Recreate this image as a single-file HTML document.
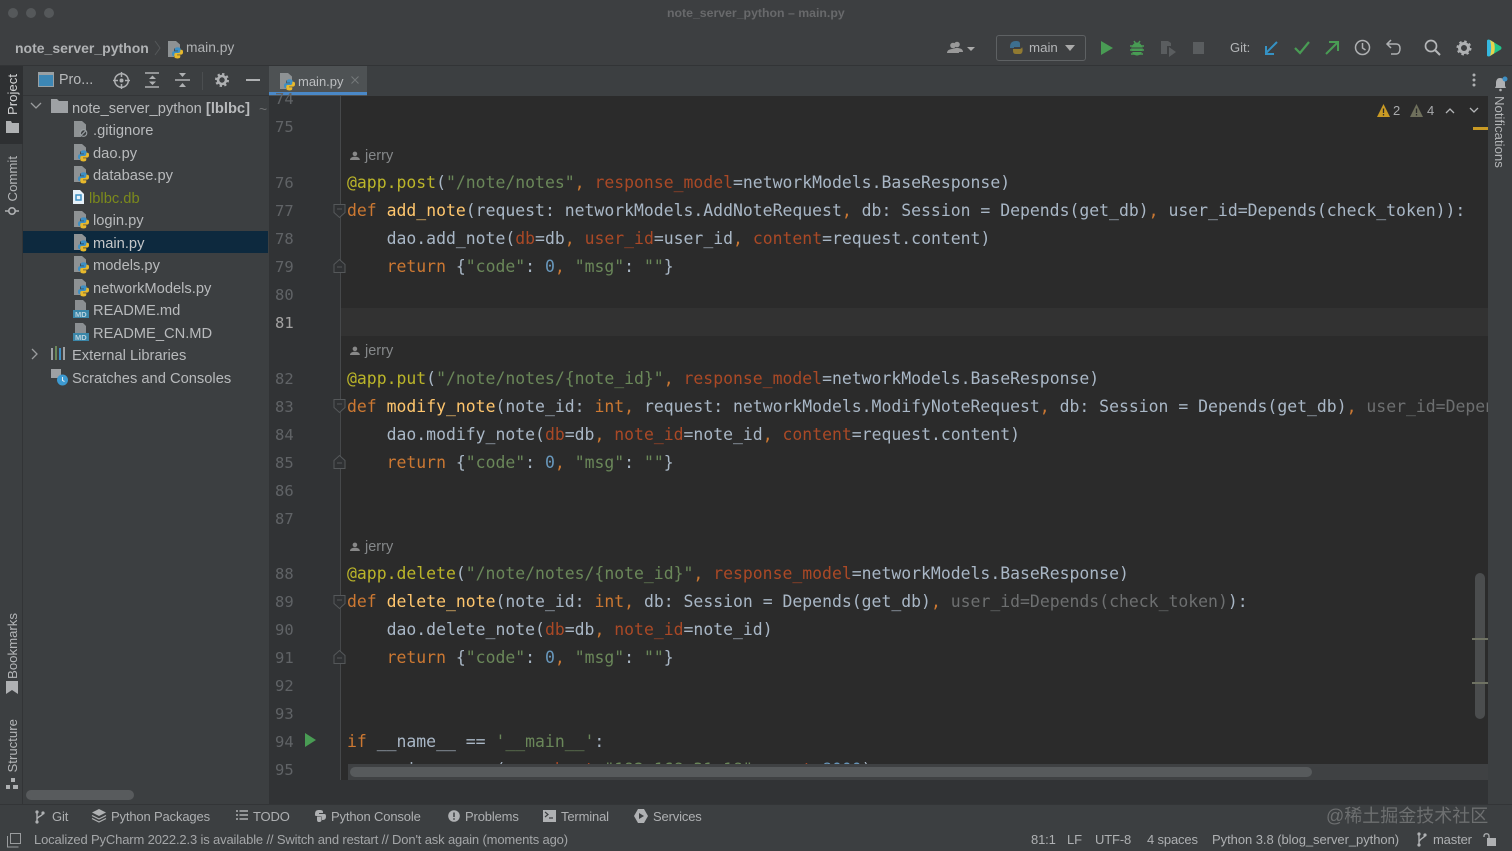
<!DOCTYPE html>
<html lang="en"><head><meta charset="utf-8"><title>note_server_python – main.py</title>
<style>
*{box-sizing:border-box}
html,body{margin:0;padding:0;background:#3c3f41}
#r{position:relative;width:1512px;height:851px;overflow:hidden;background:#3c3f41;font-family:"Liberation Sans",sans-serif;color:#b4b6b8;font-size:14px}
.a{position:absolute}
.t{position:absolute;white-space:nowrap;line-height:18px}
.c{position:absolute;left:347px;white-space:pre;font-family:"DejaVu Sans Mono","Liberation Mono",monospace;font-size:16.45px;line-height:28px;color:#a9b7c6;height:28px}
.k{color:#cc7832}.s{color:#6a8759}.n{color:#6897bb}.d{color:#bbb529}.f{color:#ffc66d}.p{color:#aa4926}.g{color:#6d6f70}
.l{position:absolute;left:275px;width:20px;font-family:"DejaVu Sans Mono","Liberation Mono",monospace;font-size:15.5px;line-height:20px;color:#606366}
.v{position:absolute;writing-mode:vertical-rl;transform:rotate(180deg);white-space:nowrap;font-size:13.2px;color:#b4b6b8;line-height:16px}
.tr{position:absolute;white-space:nowrap;font-size:14.7px;line-height:20px;color:#b8babc}
svg{position:absolute;overflow:visible}
.j{position:absolute;left:365px;font-size:14.5px;line-height:18px;color:#85888a}
.b{font-size:13px;letter-spacing:-.15px;color:#aeb0b2}
</style></head><body><div id="r">
<svg width="0" height="0" style="position:absolute"><defs>
<g id="py"><path d="M0 0h8l4 3.500v4H6v8.500H0z" fill="#8e9294"/><g transform="translate(-.6,.9) scale(.92)"><path d="M11 6c-2.500 0-3 1-3 2v1.500h3.500v.7H7c-1.300 0-2 1-2 2.800 0 1.800.7 2.500 1.700 2.500H8v-1.600c0-1.200 1-1.900 2-1.900h3c1 0 1.500-.7 1.500-1.500V8c0-1-1-2-3.500-2z" fill="#3d8fc4"/><path d="M11 18c2.500 0 3-1 3-2v-1.500h-3.500v-.7H15c1.300 0 2-1 2-2.800 0-1.800-.7-2.500-1.700-2.500H14v1.600c0 1.200-1 1.900-2 1.900H9c-1 0-1.500.7-1.500 1.500V16c0 1 1 2 3.500 2z" fill="#e8b92c"/></g></g>
<g id="md"><path d="M3 -1h8l3 3v7H3z" fill="#8b8f92"/><rect x="1" y="9" width="16" height="8" fill="#3a86a8"/><text x="3" y="16" font-family="Liberation Sans,sans-serif" font-size="7.500" font-weight="bold" fill="#b9d3df">MD</text></g>
<g id="usr"><circle cx="6" cy="3.500" r="2.800" fill="#999"/><path d="M0 11c0-3 3-4 6-4s6 1 6 4z" fill="#999"/></g>
</defs></svg>

<!-- Title bar -->
<div class="a" style="left:0;top:0;width:1512px;height:66px;background:#3d3f41"></div>
<div class="a" style="left:0;top:65px;width:1512px;height:1px;background:#323436"></div>
<div class="a" style="left:8px;top:8px;width:10px;height:10px;border-radius:50%;background:#55585a"></div>
<div class="a" style="left:26px;top:8px;width:10px;height:10px;border-radius:50%;background:#55585a"></div>
<div class="a" style="left:44px;top:8px;width:10px;height:10px;border-radius:50%;background:#55585a"></div>
<div class="t" style="left:667px;top:4px;font-size:12.3px;font-weight:bold;color:#68696b">note_server_python – main.py</div>
<div class="t" style="left:15px;top:39px;font-size:14px;font-weight:bold;color:#b0b2b4">note_server_python</div>
<svg style="left:154px;top:40px" width="8" height="16"><path d="M1 1l5 7-5 7" fill="none" stroke="#55585a"/></svg>
<svg style="left:168px;top:41px" width="18" height="19"><use href="#py"/></svg>
<div class="t" style="left:186px;top:39px;font-size:13.8px;color:#b0b2b4">main.py</div>

<!-- Toolbar right -->
<svg style="left:947px;top:40px" width="30" height="16"><use href="#usr" transform="translate(4,1)"/><use href="#usr" transform="translate(0,2)"/><path d="M20 7h8l-4 4z" fill="#aaa"/></svg>
<div class="a" style="left:996px;top:35px;width:90px;height:26px;border:1px solid #5e6163;border-radius:3px"></div>
<svg style="left:1008px;top:40px" width="16" height="16" opacity=".6"><path d="M2 7c0-4 2-6 6-6 3 0 4 1 4 3v3H6v1H2z" fill="#3d8fc4"/><path d="M14 7c1 2 1 7-2 7H8c-3 0-3-2-3-5h6c2 0 3-1 3-2z" fill="#c9a227"/></svg>
<div class="t" style="left:1029px;top:39px;font-size:13.3px;color:#b4b6b8">main</div>
<svg style="left:1064px;top:44px" width="12" height="8"><path d="M1 1h10l-5 6z" fill="#aaa"/></svg>
<svg style="left:1100px;top:40px" width="14" height="16"><path d="M1 1l12 7-12 7z" fill="#499c54"/></svg>
<svg style="left:1129px;top:40px" width="16" height="16"><ellipse cx="8" cy="9" rx="5.500" ry="6.500" fill="#499c54"/><path d="M1 6h14M1 10h14M2 14h12M5 1l2 3M11 1L9 4" stroke="#499c54" stroke-width="1.500"/><path d="M3 8h10M3 11.500h10" stroke="#3d3f41"/></svg>
<svg style="left:1160px;top:40px" width="16" height="16"><path d="M1 1h7l3 2v3H7v8H1z" fill="#5a5d5f"/><path d="M9 7l7 5-7 5z" fill="#5a5d5f"/></svg>
<div class="a" style="left:1193px;top:42px;width:11px;height:12px;background:#5a5d5f"></div>
<div class="t" style="left:1230px;top:39px;font-size:13px;color:#b4b6b8">Git:</div>
<svg style="left:1263px;top:40px" width="16" height="16"><path d="M14 2L3 13M3 6v8h8" fill="none" stroke="#3592c4" stroke-width="2"/></svg>
<svg style="left:1294px;top:41px" width="16" height="14"><path d="M1 7l5 5L15 1" fill="none" stroke="#499c54" stroke-width="2.200"/></svg>
<svg style="left:1324px;top:40px" width="16" height="16"><path d="M2 14L13 3M5 2h9v9" fill="none" stroke="#499c54" stroke-width="2"/></svg>
<svg style="left:1354px;top:39px" width="17" height="17"><circle cx="8.500" cy="8.500" r="7" fill="none" stroke="#aeb0b2" stroke-width="1.500"/><path d="M8.500 4v5l3 2" fill="none" stroke="#aeb0b2" stroke-width="1.500"/></svg>
<svg style="left:1386px;top:39px" width="16" height="17"><path d="M5 1L1 5l4 4M1 5h9c3 0 4 2 4 4.500S13 15 10 15H5" fill="none" stroke="#aeb0b2" stroke-width="1.500"/></svg>
<svg style="left:1424px;top:39px" width="17" height="17"><circle cx="7" cy="7" r="5.500" fill="none" stroke="#b4b6b8" stroke-width="1.700"/><path d="M11 11l5 5" stroke="#b4b6b8" stroke-width="2"/></svg>
<svg style="left:1456px;top:40px" width="16" height="16"><circle cx="8" cy="8" r="4.500" fill="none" stroke="#aeb0b2" stroke-width="3"/><circle cx="8" cy="8" r="6.500" fill="none" stroke="#aeb0b2" stroke-width="2" stroke-dasharray="2.500 2.600"/></svg>
<svg style="left:1486px;top:39px" width="16" height="18"><path d="M1 2c0-1 1-2 3-1l10 6c2 1 2 3 0 4L4 17c-2 1-3 0-3-1z" fill="#21c48a"/><path d="M1 2c0-1 1-2 3-1l2 1.200c1 4 1 9 0 13L4 17c-2 1-3 0-3-1z" fill="#35b8e0"/><path d="M4 1l4 2.400c1 3 1 8 0 11L4 17c1.500-5 1.500-11 0-16z" fill="#e8d24c"/></svg>

<!-- Left tool bar -->
<div class="a" style="left:0;top:66px;width:23px;height:738px;background:#3c3f41;border-right:1px solid #323436"></div>
<div class="a" style="left:0;top:66px;width:23px;height:78px;background:#2e3032"></div>
<div class="v" style="left:5px;top:74px;color:#d4d5d6">Project</div>
<svg style="left:6px;top:121px" width="13" height="12"><path d="M0 0h5l1 2h7v10H0z" fill="#afb1b3"/></svg>
<div class="v" style="left:5px;top:156px">Commit</div>
<svg style="left:5px;top:205px" width="14" height="12"><circle cx="7" cy="6" r="3.200" fill="none" stroke="#aeb0b2" stroke-width="1.600"/><path d="M0 6h3.500M10.500 6H14" stroke="#aeb0b2" stroke-width="1.600"/></svg>
<div class="v" style="left:5px;top:613px">Bookmarks</div>
<svg style="left:6px;top:681px" width="12" height="13"><path d="M0 0h12v13l-6-4-6 4z" fill="#afb1b3"/></svg>
<div class="v" style="left:5px;top:719px">Structure</div>
<svg style="left:6px;top:778px" width="13" height="12"><path d="M5 0h4v4H5zM0 7h4v4H0zM7 7h5v4H7z" fill="#afb1b3"/></svg>

<!-- Project header -->
<div class="a" style="left:23px;top:66px;width:246px;height:30px;background:#3c3f41;border-bottom:1px solid #333537"></div>
<svg style="left:38px;top:72px" width="16" height="16"><rect x=".5" y=".5" width="15" height="14" fill="#3d87b5" stroke="#9aa0a3"/><rect x=".5" y=".5" width="15" height="2.500" fill="#9aa0a3"/></svg>
<div class="t" style="left:59px;top:71px;font-size:14.3px;color:#b8babc">Pro...</div>
<svg style="left:113px;top:72px" width="17" height="17"><circle cx="8.500" cy="8.500" r="6.800" fill="none" stroke="#aeb0b2" stroke-width="1.500"/><circle cx="8.500" cy="8.500" r="2" fill="#aeb0b2"/><path d="M8.500 0v5M8.500 12v5M0 8.500h5M12 8.500h5" stroke="#aeb0b2" stroke-width="1.500"/></svg>
<svg style="left:145px;top:72px" width="15" height="16"><path d="M0 1h14M0 15h14" stroke="#aeb0b2" stroke-width="1.500"/><path d="M4 7l3.500-3.500L11 7zM4 9.500l3.500 3.500 3.500-3.500z" fill="#aeb0b2"/></svg>
<svg style="left:175px;top:72px" width="15" height="16"><path d="M0 8h15" stroke="#aeb0b2" stroke-width="1.500"/><path d="M4 1l3.500 4L11 1zM4 15l3.500-4 3.500 4z" fill="#aeb0b2"/></svg>
<div class="a" style="left:202px;top:72px;width:1px;height:18px;background:#4b4e50"></div>
<svg style="left:215px;top:73px" width="14" height="14"><circle cx="7" cy="7" r="4" fill="none" stroke="#aeb0b2" stroke-width="2.600"/><circle cx="7" cy="7" r="6" fill="none" stroke="#aeb0b2" stroke-width="2" stroke-dasharray="2.300 2.400"/></svg>
<div class="a" style="left:246px;top:79px;width:14px;height:2px;background:#aeb0b2"></div>

<!-- Tabs -->
<div class="a" style="left:269px;top:66px;width:1219px;height:30px;background:#3c3f41"></div>
<div class="a" style="left:269px;top:66px;width:98px;height:30px;background:#4e5254"></div>
<div class="a" style="left:269px;top:92px;width:98px;height:3px;background:#4a88c7"></div>
<svg style="left:280px;top:73px" width="18" height="19"><use href="#py"/></svg>
<div class="t" style="left:298px;top:73px;font-size:13px;color:#bcbec0">main.py</div>
<svg style="left:351px;top:76px" width="8" height="8"><path d="M.5.500l7 7M7.500.500l-7 7" stroke="#75787a"/></svg>
<svg style="left:1472px;top:73px" width="4" height="14"><circle cx="2" cy="2" r="1.500" fill="#aeb0b2"/><circle cx="2" cy="7" r="1.500" fill="#aeb0b2"/><circle cx="2" cy="12" r="1.500" fill="#aeb0b2"/></svg>

<!-- Project tree -->
<div class="a" style="left:23px;top:96px;width:246px;height:708px;background:#3c3f41"></div>
<div class="a" style="left:23px;top:231px;width:245px;height:22px;background:#0d293e"></div>
<svg style="left:30px;top:102px" width="12" height="8"><path d="M1 1l5 5 5-5" fill="none" stroke="#9a9c9e" stroke-width="1.300"/></svg>
<svg style="left:51px;top:99px" width="17" height="14"><path d="M0 0h6l2 2h9v12H0z" fill="#9ea1a4"/></svg>
<div class="tr" style="left:72px;top:99px">note_server_python <b style="font-weight:bold">[lblbc]</b></div>
<div class="t" style="left:259px;top:100px;font-size:14px;color:#6d6f70">~</div>
<svg style="left:74px;top:121px" width="17" height="18"><path d="M0 0h8l4 3.500V9a4.500 4.500 0 0 0-4.500 7H0z" fill="#8e9294"/><circle cx="9.500" cy="12" r="3.300" fill="none" stroke="#9aa0a3" stroke-width="1.100"/><path d="M7.300 14.200l4.400-4.400" stroke="#9aa0a3" stroke-width="1.100"/></svg>
<div class="tr" style="left:93px;top:121px">.gitignore</div>
<svg style="left:74px;top:144px" width="18" height="19"><use href="#py"/></svg>
<div class="tr" style="left:93px;top:144px">dao.py</div>
<svg style="left:74px;top:166px" width="18" height="19"><use href="#py"/></svg>
<div class="tr" style="left:93px;top:166px">database.py</div>
<svg style="left:73px;top:190px" width="11" height="14"><path d="M0 0h7l4 4v10H0z" fill="#e6f0f8"/><rect x="3" y="5" width="5" height="5" fill="none" stroke="#3d8fc4" stroke-width="1.500"/></svg>
<div class="tr" style="left:89px;top:189px;color:#7c8a1c">lblbc.db</div>
<svg style="left:74px;top:211px" width="18" height="19"><use href="#py"/></svg>
<div class="tr" style="left:93px;top:211px">login.py</div>
<svg style="left:74px;top:234px" width="18" height="19"><use href="#py"/></svg>
<div class="tr" style="left:93px;top:234px;color:#c4c6c8">main.py</div>
<svg style="left:74px;top:256px" width="18" height="19"><use href="#py"/></svg>
<div class="tr" style="left:93px;top:256px">models.py</div>
<svg style="left:74px;top:279px" width="18" height="19"><use href="#py"/></svg>
<div class="tr" style="left:93px;top:279px">networkModels.py</div>
<svg style="left:72px;top:301px" width="18" height="18"><use href="#md"/></svg>
<div class="tr" style="left:93px;top:301px">README.md</div>
<svg style="left:72px;top:324px" width="18" height="18"><use href="#md"/></svg>
<div class="tr" style="left:93px;top:324px">README_CN.MD</div>
<svg style="left:31px;top:348px" width="8" height="12"><path d="M1 1l5 5-5 5" fill="none" stroke="#9a9c9e" stroke-width="1.300"/></svg>
<svg style="left:51px;top:346px" width="17" height="15"><path d="M1 2v12" stroke="#9ea1a4" stroke-width="2"/><path d="M5 0v14" stroke="#6a8759" stroke-width="2"/><path d="M9 2v12" stroke="#3d8fc4" stroke-width="2"/><path d="M13 1v13" stroke="#9ea1a4" stroke-width="2"/></svg>
<div class="tr" style="left:72px;top:346px">External Libraries</div>
<svg style="left:51px;top:369px" width="18" height="18"><path d="M0 0h10v9H0z" fill="#9ea1a4"/><circle cx="11.500" cy="11" r="5.500" fill="#3d9ad1"/><path d="M11.500 8v3.500l2 1" fill="none" stroke="#dfe9f0"/></svg>
<div class="tr" style="left:72px;top:369px">Scratches and Consoles</div>
<div class="a" style="left:26px;top:790px;width:108px;height:10px;border-radius:5px;background:#585b5d"></div>

<!-- Gutter + editor -->
<div class="a" style="left:269px;top:96px;width:71px;height:708px;background:#313335"></div>
<div class="a" style="left:340px;top:96px;width:1148px;height:684px;background:#2b2b2b;border-left:1px solid #46484a"></div>
<div class="a" style="left:340px;top:780px;width:1148px;height:24px;background:#313335"></div>
<div class="a" style="left:341px;top:308px;width:1147px;height:28px;background:#323232"></div>
<div class="a" style="left:269px;top:308px;width:71px;height:28px;background:#313335"></div>

<div class="l" style="top:89px">74</div><div class="l" style="top:117px">75</div>
<div class="l" style="top:173px">76</div><div class="l" style="top:201px">77</div><div class="l" style="top:229px">78</div><div class="l" style="top:257px">79</div><div class="l" style="top:285px">80</div><div class="l" style="top:313px;color:#a4a3a3">81</div>
<div class="l" style="top:369px">82</div><div class="l" style="top:397px">83</div><div class="l" style="top:425px">84</div><div class="l" style="top:453px">85</div><div class="l" style="top:481px">86</div><div class="l" style="top:509px">87</div>
<div class="l" style="top:564px">88</div><div class="l" style="top:592px">89</div><div class="l" style="top:620px">90</div><div class="l" style="top:648px">91</div><div class="l" style="top:676px">92</div><div class="l" style="top:704px">93</div><div class="l" style="top:732px">94</div><div class="l" style="top:760px">95</div>

<svg style="left:305px;top:733px" width="12" height="15"><path d="M0 0l11 7-11 7z" fill="#499c54"/></svg>
<svg style="left:333px;top:204px" width="13" height="14"><path d="M1 .5h11v8l-5.500 5-5.500-5z" fill="#2f3133" stroke="#55585a"/><path d="M4 5h5" stroke="#55585a"/></svg>
<svg style="left:333px;top:259px" width="13" height="14"><path d="M1 13.500h11v-8L6.500.5 1 5.500z" fill="#2f3133" stroke="#55585a"/><path d="M4 8h5" stroke="#55585a"/></svg>
<svg style="left:333px;top:399px" width="13" height="14"><path d="M1 .5h11v8l-5.500 5-5.500-5z" fill="#2f3133" stroke="#55585a"/><path d="M4 5h5" stroke="#55585a"/></svg>
<svg style="left:333px;top:455px" width="13" height="14"><path d="M1 13.500h11v-8L6.500.5 1 5.500z" fill="#2f3133" stroke="#55585a"/><path d="M4 8h5" stroke="#55585a"/></svg>
<svg style="left:333px;top:595px" width="13" height="14"><path d="M1 .5h11v8l-5.500 5-5.500-5z" fill="#2f3133" stroke="#55585a"/><path d="M4 5h5" stroke="#55585a"/></svg>
<svg style="left:333px;top:650px" width="13" height="14"><path d="M1 13.500h11v-8L6.500.5 1 5.500z" fill="#2f3133" stroke="#55585a"/><path d="M4 8h5" stroke="#55585a"/></svg>

<!-- Code -->
<svg style="left:350px;top:151px" width="10" height="10"><use href="#usr" transform="scale(.82)" opacity=".85"/></svg><div class="j" style="top:147px">jerry</div>
<svg style="left:350px;top:346px" width="10" height="10"><use href="#usr" transform="scale(.82)" opacity=".85"/></svg><div class="j" style="top:342px">jerry</div>
<svg style="left:350px;top:542px" width="10" height="10"><use href="#usr" transform="scale(.82)" opacity=".85"/></svg><div class="j" style="top:538px">jerry</div>

<div class="c" style="top:169px"><span class="d">@app.post</span>(<span class="s">"/note/notes"</span><span class="k">,</span> <span class="p">response_model</span>=networkModels.BaseResponse)</div>
<div class="c" style="top:197px"><span class="k">def</span> <span class="f">add_note</span>(request: networkModels.AddNoteRequest<span class="k">,</span> db: Session = Depends(get_db)<span class="k">,</span> user_id=Depends(check_token)):</div>
<div class="c" style="top:225px">    dao.add_note(<span class="p">db</span>=db<span class="k">,</span> <span class="p">user_id</span>=user_id<span class="k">,</span> <span class="p">content</span>=request.content)</div>
<div class="c" style="top:253px">    <span class="k">return</span> {<span class="s">"code"</span>: <span class="n">0</span><span class="k">,</span> <span class="s">"msg"</span>: <span class="s">""</span>}</div>

<div class="c" style="top:365px"><span class="d">@app.put</span>(<span class="s">"/note/notes/{note_id}"</span><span class="k">,</span> <span class="p">response_model</span>=networkModels.BaseResponse)</div>
<div class="c" style="top:393px;width:1141px;overflow:hidden"><span class="k">def</span> <span class="f">modify_note</span>(note_id: <span class="k">int</span><span class="k">,</span> request: networkModels.ModifyNoteRequest<span class="k">,</span> db: Session = Depends(get_db)<span class="k">,</span> <span class="g">user_id=Depends(check_token)):</span></div>
<div class="c" style="top:421px">    dao.modify_note(<span class="p">db</span>=db<span class="k">,</span> <span class="p">note_id</span>=note_id<span class="k">,</span> <span class="p">content</span>=request.content)</div>
<div class="c" style="top:449px">    <span class="k">return</span> {<span class="s">"code"</span>: <span class="n">0</span><span class="k">,</span> <span class="s">"msg"</span>: <span class="s">""</span>}</div>

<div class="c" style="top:560px"><span class="d">@app.delete</span>(<span class="s">"/note/notes/{note_id}"</span><span class="k">,</span> <span class="p">response_model</span>=networkModels.BaseResponse)</div>
<div class="c" style="top:588px"><span class="k">def</span> <span class="f">delete_note</span>(note_id: <span class="k">int</span><span class="k">,</span> db: Session = Depends(get_db)<span class="k">,</span> <span class="g">user_id=Depends(check_token)</span>):</div>
<div class="c" style="top:616px">    dao.delete_note(<span class="p">db</span>=db<span class="k">,</span> <span class="p">note_id</span>=note_id)</div>
<div class="c" style="top:644px">    <span class="k">return</span> {<span class="s">"code"</span>: <span class="n">0</span><span class="k">,</span> <span class="s">"msg"</span>: <span class="s">""</span>}</div>

<div class="c" style="top:728px"><span class="k">if</span> __name__ == <span class="s">'__main__'</span>:</div>
<div class="c" style="top:756px;height:8px;overflow:hidden">    uvicorn.run(app<span class="k">,</span> <span class="p">host</span>=<span class="s">"192.168.31.18"</span><span class="k">,</span> <span class="p">port</span>=<span class="n">8000</span>)</div>

<!-- Scrollbars -->
<div class="a" style="left:348px;top:764px;width:1140px;height:16px;background:#3f4143"></div>
<div class="a" style="left:350px;top:767px;width:962px;height:10px;border-radius:5px;background:#575a5c"></div>
<div class="a" style="left:1475px;top:573px;width:10px;height:146px;border-radius:5px;background:#4b4d4e"></div>
<div class="a" style="left:1472px;top:638px;width:17px;height:2px;background:#6f7263"></div>
<div class="a" style="left:1472px;top:682px;width:17px;height:2px;background:#6f7263"></div>
<div class="a" style="left:1473px;top:127px;width:15px;height:3px;background:#c99a24"></div>

<!-- Inspection widget -->
<svg style="left:1377px;top:104px" width="13" height="13"><path d="M6.500 0L13 13H0z" fill="#c99a24"/><path d="M6.500 4.500v4.500M6.500 10v1.500" stroke="#2b2b2b" stroke-width="1.300"/></svg>
<div class="t" style="left:1393px;top:102px;font-size:13px;color:#a9abad">2</div>
<svg style="left:1410px;top:104px" width="13" height="13"><path d="M6.500 0L13 13H0z" fill="#6f705c"/><path d="M6.500 4.500v4.500M6.500 10v1.500" stroke="#2b2b2b" stroke-width="1.300"/></svg>
<div class="t" style="left:1427px;top:102px;font-size:13px;color:#a9abad">4</div>
<svg style="left:1445px;top:107px" width="10" height="7"><path d="M1 6l4-4 4 4" fill="none" stroke="#b4b6b8" stroke-width="1.300"/></svg>
<svg style="left:1469px;top:107px" width="10" height="7"><path d="M1 1l4 4 4-4" fill="none" stroke="#b4b6b8" stroke-width="1.300"/></svg>

<!-- Right tool bar -->
<div class="a" style="left:1488px;top:66px;width:24px;height:738px;background:#3c3f41"></div>
<svg style="left:1493px;top:76px" width="16" height="16"><path d="M7 2c-3 0-4 2.500-4 5v3l-1 2h11l-1-2V7c0-3-2-5-5-5z" fill="#afb1b3"/><circle cx="7.500" cy="14" r="1.300" fill="#afb1b3"/><circle cx="12" cy="3" r="2.500" fill="#3d8fc4"/></svg>
<div class="v" style="left:1491px;top:96px;transform:none">Notifications</div>

<!-- Bottom bars -->
<div class="a" style="left:0;top:804px;width:1512px;height:1px;background:#333537"></div>
<div class="a" style="left:0;top:805px;width:1512px;height:46px;background:#3c3f41"></div>
<svg style="left:35px;top:810px" width="10" height="14"><circle cx="2" cy="2" r="1.600" fill="#afb1b3"/><circle cx="2" cy="12" r="1.600" fill="#afb1b3"/><circle cx="8" cy="3" r="1.600" fill="#afb1b3"/><path d="M2 2v10M8 3c0 3-5 3-6 6" fill="none" stroke="#afb1b3" stroke-width="1.400"/></svg>
<div class="t b" style="left:52px;top:808px">Git</div>
<svg style="left:92px;top:809px" width="14" height="14"><path d="M7 0l7 3.500-7 3.500L0 3.500z" fill="#afb1b3"/><path d="M0 6.500L7 10l7-3.500M0 9.500L7 13l7-3.500" fill="none" stroke="#afb1b3" stroke-width="1.200"/></svg>
<div class="t b" style="left:111px;top:808px">Python Packages</div>
<svg style="left:236px;top:810px" width="12" height="11"><path d="M0 1h2M0 5h2M0 9h2M3.500 1H12M3.500 5H12M3.500 9H12" stroke="#afb1b3" stroke-width="1.600"/></svg>
<div class="t b" style="left:253px;top:808px">TODO</div>
<svg style="left:313px;top:809px" width="13" height="13"><path d="M2 6c0-4 1-5 4.500-5S10 2 10 4H6v1h5c1.500 0 2 .5 2 2.500S12 11 10 11H9V8.500C9 7 8 7 6 7H4C3 7 2 7 2 6z" fill="#afb1b3"/><path d="M4 7.500h4.500V11c0 1.500-1 2-2.500 2S4 12 4 10.500z" fill="#afb1b3"/></svg>
<div class="t b" style="left:331px;top:808px">Python Console</div>
<svg style="left:448px;top:810px" width="12" height="12"><circle cx="6" cy="6" r="5.800" fill="#afb1b3"/><path d="M6 2.500v4.500M6 8.200v1.500" stroke="#3c3f41" stroke-width="1.500"/></svg>
<div class="t b" style="left:465px;top:808px">Problems</div>
<svg style="left:543px;top:810px" width="13" height="12"><rect width="13" height="12" fill="#afb1b3"/><path d="M2 2l3 2.500L2 7M6 8h4" fill="none" stroke="#3c3f41" stroke-width="1.200"/></svg>
<div class="t b" style="left:561px;top:808px">Terminal</div>
<svg style="left:634px;top:809px" width="14" height="14"><path d="M4 0h6l4 7-4 7H4L0 7z" fill="#afb1b3"/><path d="M5 4l5 3-5 3z" fill="#3c3f41"/></svg>
<div class="t b" style="left:653px;top:808px">Services</div>

<div class="t" style="left:1326px;top:805px;font-size:18px;line-height:22px;font-family:'Liberation Sans','Noto Sans CJK SC',sans-serif;color:#6d6f70">@稀土掘金技术社区</div>

<svg style="left:7px;top:833px" width="14" height="15"><rect x="3.500" y=".5" width="10" height="10" fill="none" stroke="#9a9c9e"/><path d="M.5 3v11h11" fill="none" stroke="#9a9c9e"/></svg>
<div class="t b" style="left:34px;top:831px;color:#a4a6a8">Localized PyCharm 2022.2.3 is available // Switch and restart // Don't ask again (moments ago)</div>
<div class="t b" style="left:1031px;top:831px">81:1</div>
<div class="t b" style="left:1067px;top:831px">LF</div>
<div class="t b" style="left:1095px;top:831px">UTF-8</div>
<div class="t b" style="left:1147px;top:831px">4 spaces</div>
<div class="t b" style="left:1212px;top:831px;letter-spacing:-.05px">Python 3.8 (blog_server_python)</div>
<svg style="left:1417px;top:832px" width="10" height="15"><circle cx="2" cy="2" r="1.600" fill="#afb1b3"/><circle cx="2" cy="13" r="1.600" fill="#afb1b3"/><circle cx="8" cy="3" r="1.600" fill="#afb1b3"/><path d="M2 2v11M8 3c0 3-5 3-6 7" fill="none" stroke="#afb1b3" stroke-width="1.400"/></svg>
<div class="t b" style="left:1433px;top:831px">master</div>
<svg style="left:1483px;top:833px" width="14" height="13"><path d="M1 4V3c0-3 5-3 5 0v2" fill="none" stroke="#afb1b3" stroke-width="1.300"/><rect x="4" y="5" width="9" height="8" fill="#afb1b3"/></svg>
</div></body></html>
